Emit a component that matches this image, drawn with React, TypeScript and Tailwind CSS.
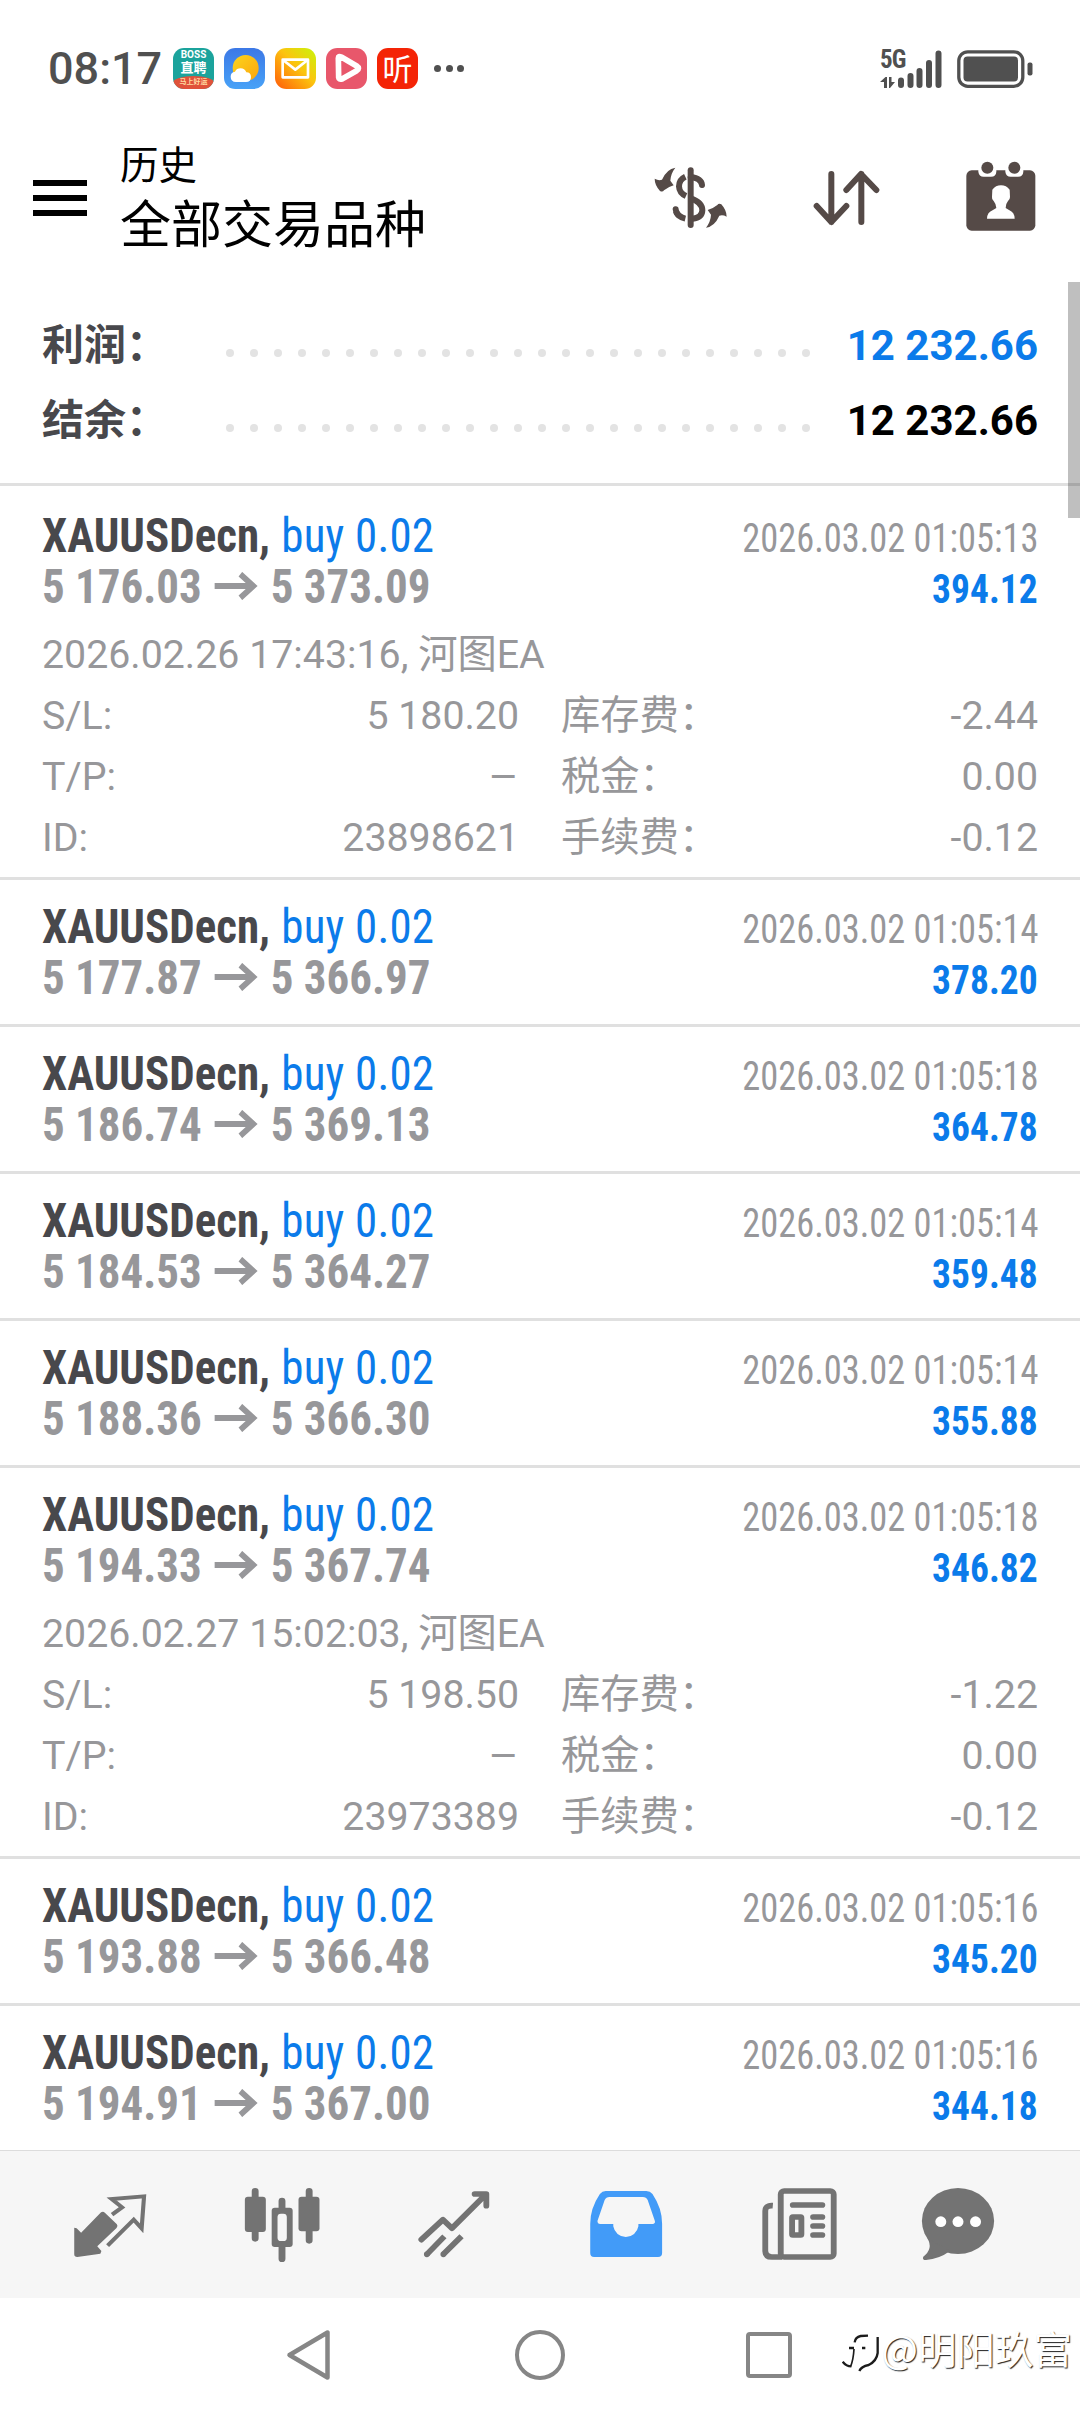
import type { ReactNode } from "react";

type Details = {
  opened: string;
  sl: string;
  id: string;
  swap: string;
  tax: string;
  fee: string;
};

type Deal = {
  open: string;
  close: string;
  time: string;
  profit: string;
  details?: Details;
};

const deals: Deal[] = [
  {
    open: "5 176.03",
    close: "5 373.09",
    time: "2026.03.02 01:05:13",
    profit: "394.12",
    details: {
      opened: "2026.02.26 17:43:16, 河图EA",
      sl: "5 180.20",
      id: "23898621",
      swap: "-2.44",
      tax: "0.00",
      fee: "-0.12",
    },
  },
  { open: "5 177.87", close: "5 366.97", time: "2026.03.02 01:05:14", profit: "378.20" },
  { open: "5 186.74", close: "5 369.13", time: "2026.03.02 01:05:18", profit: "364.78" },
  { open: "5 184.53", close: "5 364.27", time: "2026.03.02 01:05:14", profit: "359.48" },
  { open: "5 188.36", close: "5 366.30", time: "2026.03.02 01:05:14", profit: "355.88" },
  {
    open: "5 194.33",
    close: "5 367.74",
    time: "2026.03.02 01:05:18",
    profit: "346.82",
    details: {
      opened: "2026.02.27 15:02:03, 河图EA",
      sl: "5 198.50",
      id: "23973389",
      swap: "-1.22",
      tax: "0.00",
      fee: "-0.12",
    },
  },
  { open: "5 193.88", close: "5 366.48", time: "2026.03.02 01:05:16", profit: "345.20" },
  { open: "5 194.91", close: "5 367.00", time: "2026.03.02 01:05:16", profit: "344.18" },
];

function StatusBar() {
  return (
    <div className="flex h-[137px] shrink-0 items-center pl-[48px] pr-[47px] text-[#505050]">
      <span className="w-[125px] text-[45px] font-medium leading-none">08:17</span>
      <div className="flex items-center gap-[10px]">
        <div className="flex size-[41px] flex-col items-center overflow-hidden rounded-[11px] bg-[#1ba39c] font-bold text-white">
          <span className="mt-[2px] text-[10px] leading-[10px]">BOSS</span>
          <span className="text-[13px] leading-[16px]">直聘</span>
          <span className="w-full rounded-t-[50%] bg-[#e0523a] text-center text-[7px] leading-[13px] text-[#ffd9a0]">
            马上好运
          </span>
        </div>
        <svg className="size-[41px]" viewBox="0 0 123 123">
          <defs>
            <linearGradient id="sky" x1="0" y1="0" x2="0" y2="1">
              <stop offset="0" stopColor="#3c78e6" />
              <stop offset="1" stopColor="#48a2f7" />
            </linearGradient>
            <linearGradient id="sun" x1="0" y1="0" x2="1" y2="1">
              <stop offset="0" stopColor="#fcd51c" />
              <stop offset="1" stopColor="#fca50e" />
            </linearGradient>
          </defs>
          <rect width="123" height="123" rx="34" fill="url(#sky)" />
          <circle cx="65" cy="60" r="39" fill="url(#sun)" />
          <path
            d="M36 102q-16-1-16-16 0-13 13-15 5-10 17-10 12 0 17 12 14 0 14 14 0 15-15 15z"
            fill="#fff"
          />
        </svg>
        <svg className="size-[41px]" viewBox="0 0 123 123">
          <defs>
            <linearGradient id="mail" x1="0" y1="1" x2="1" y2="0">
              <stop offset="0" stopColor="#ff5a0a" />
              <stop offset="0.55" stopColor="#fcc40f" />
              <stop offset="1" stopColor="#c8f50a" />
            </linearGradient>
          </defs>
          <rect width="123" height="123" rx="34" fill="url(#mail)" />
          <g fill="none" stroke="#fff" strokeWidth="8" strokeLinejoin="round">
            <rect x="23" y="35" width="76" height="53" />
            <path d="M24 36l37 29 37-29" />
          </g>
        </svg>
        <svg className="size-[41px]" viewBox="0 0 123 123">
          <rect width="123" height="123" rx="34" fill="#e8576b" />
          <path
            d="M37 31q0-8 9-4l46 27q11 7 0 14L48 93q-9 3-10-5z"
            fill="#e8576b"
            stroke="#fff"
            strokeWidth="17"
            strokeLinejoin="round"
          />
        </svg>
        <div className="flex size-[41px] items-center justify-center rounded-[11px] bg-[#f42406]">
          <span className="-mt-[3px] font-['Noto_Sans_CJK_SC'] text-[30px] font-normal leading-none text-white">听</span>
        </div>
      </div>
      <div className="ml-[16px] flex gap-[4.500px]">
        <i className="size-[7px] rounded-full bg-[#505050]" />
        <i className="size-[7px] rounded-full bg-[#505050]" />
        <i className="size-[7px] rounded-full bg-[#505050]" />
      </div>
      <div className="relative ml-auto h-[38px] w-[62px]">
        <span className="absolute left-0 top-0 text-[25px] font-bold leading-[19px] tracking-[-1px] [font-stretch:75%]">
          5G
        </span>
        <svg className="h-[38px] w-[62px]" viewBox="0 0 62 38">
          <g stroke="#505050" strokeWidth="6" strokeLinecap="round">
            <path d="M21 30.500V35M30.500 26V35M39.500 21V35M49 13V35M58.500 3.500V35" />
          </g>
          <path d="M0 32L5.500 27H7V38H4V32zM9 27h2.500v5H15l-5 6H9z" fill="#505050" />
        </svg>
      </div>
      <svg className="ml-[15px] h-[38px] w-[76px]" viewBox="0 0 76 38">
        <rect x="1.800" y="1.800" width="64" height="34.500" rx="9" fill="none" stroke="#505050" strokeWidth="3.300" />
        <rect x="6.500" y="6.500" width="54.500" height="25" rx="4" fill="#505050" />
        <rect x="70.500" y="12.500" width="5" height="13" rx="2" fill="#505050" />
      </svg>
    </div>
  );
}

function Header() {
  return (
    <header className="flex h-[122px] shrink-0 items-center pl-[33px] pr-[44px]">
      <div className="flex flex-col gap-[9px]">
        <i className="h-[6px] w-[54px] bg-black" />
        <i className="h-[6px] w-[54px] bg-black" />
        <i className="h-[6px] w-[54px] bg-black" />
      </div>
      <div className="-mt-3 ml-[33px] font-['Noto_Sans_CJK_SC','Roboto',sans-serif] text-black">
        <div className="text-[38.500px] leading-[59px]">历史</div>
        <h1 className="text-[51px] leading-[59px]">全部交易品种</h1>
      </div>
      <svg className="ml-auto h-[62px] w-[73px]" viewBox="40 52 219 186" fill="none" stroke="#554a47">
        <path d="M150 62V226" strokeWidth="18" strokeLinecap="round" />
        <path d="M150 82Q182 86 184 106M105 179Q106 190 112 196" strokeWidth="18" strokeLinecap="round" />
        <path
          d="M134 81Q115 90 115 110Q116 130 136 139M150 146Q185 158 185 182Q184 204 156 207M106 184Q112 202 134 207"
          strokeWidth="18"
        />
        <path
          id="swap"
          d="M104 54Q78 58 64 90Q54 94 42 87Q42 106 58 124Q66 128 70 122Q82 112 99 107L89 93Q90 72 104 54Z"
          fill="#554a47"
          stroke="none"
        />
        <use href="#swap" transform="rotate(180 150 144)" />
      </svg>
      <svg
        className="ml-[86px] h-[56px] w-[67px]"
        viewBox="518 60 201 168"
        fill="none"
        stroke="#554a47"
        strokeWidth="18"
        strokeLinecap="round"
        strokeLinejoin="round"
      >
        <path d="M573 72V216M529 168L573 216L618 168M663 216V72M618 120L662 72L708 120" />
      </svg>
      <svg className="-mt-1 ml-[86px] size-[70px]" viewBox="977 34 210 210" fill="#554a47">
        <rect x="978" y="62" width="207" height="181" rx="16" />
        <path
          d="M1014 50V66Q1016 81 1030 81H1052Q1067 81 1068 66V50ZM1095 50V66Q1097 81 1111 81H1133Q1148 81 1149 66V50Z"
          fill="#fff"
        />
        <circle cx="1041" cy="54" r="18" />
        <circle cx="1122" cy="54" r="18" />
        <path
          d="M1040 207Q1040 188 1058 181L1068 175Q1068 164 1060 154Q1054 150 1055 142L1056 120Q1066 107 1082 107Q1098 107 1108 120L1109 142Q1109 150 1103 154Q1095 164 1096 175L1106 181Q1123 188 1123 207Z"
          fill="#fff"
        />
      </svg>
    </header>
  );
}

function SummaryRow({ label, value, blue }: { label: string; value: string; blue?: boolean }) {
  return (
    <div className="flex h-[75px] items-center text-[42px] font-bold leading-[75px]">
      <span className="w-[184px] text-[#48484c]">{label}</span>
      <div className="mt-[15px] flex w-[584px] justify-between">
        {Array.from({ length: 25 }, (_, i) => (
          <i key={i} className="size-[8px] rounded-full bg-[#e3e3e3]" />
        ))}
      </div>
      <span className={blue ? "ml-auto text-[#0b7bea]" : "ml-auto text-black"}>{value}</span>
    </div>
  );
}

function Field({ label, children }: { label: string; children: ReactNode }) {
  return (
    <div className="flex justify-between">
      <span>{label}</span>
      <span>{children}</span>
    </div>
  );
}

function DealRow({ deal, first }: { deal: Deal; first: boolean }) {
  const d = deal.details;
  return (
    <div className={`border-t-[3px] border-[#e0e0e0] px-[42px] ${first ? "pt-[24px]" : "pt-[21px]"}`}>
      <div className="flex h-[51px] items-baseline justify-between leading-[52px] [font-stretch:75%]">
        <div className="origin-left scale-x-[0.937] text-[48px]">
          <span className="font-bold text-[#48484c]">XAUUSDecn,</span>{" "}
          <span className="ml-[1px] tracking-[0.200px] text-[#0b7bea]">buy 0.02</span>
        </div>
        <span className="origin-right scale-x-[0.910] text-[40px] text-[#97979a]">{deal.time}</span>
      </div>
      <div className="flex h-[51px] items-baseline justify-between font-bold leading-[51px] [font-stretch:75%]">
        <div className="origin-left scale-x-[0.937] text-[48px] text-[#97979a]">
          {deal.open}
          <svg
            className="mx-[13.500px] mb-[3px] inline-block h-[28px] w-[46.500px] align-baseline"
            viewBox="0 0 47 28"
            fill="none"
            stroke="currentColor"
            strokeWidth="6"
          >
            <path d="M0 14H43M28 2L42 14L28 26" />
          </svg>
          {deal.close}
        </div>
        <span className="origin-right scale-x-[0.937] text-[40px] text-[#0b7bea]">{deal.profit}</span>
      </div>
      {d ? (
        <div className="mt-[13px] pb-[8px] text-[39.300px] leading-[61px] text-[#97979a]">
          <div>{d.opened}</div>
          <div className="grid grid-cols-2 gap-x-[42px]">
            <Field label="S/L:">{d.sl}</Field>
            <Field label="库存费：">{d.swap}</Field>
            <Field label="T/P:">
              <span className="inline-block origin-right scale-x-[1.180]">–</span>
            </Field>
            <Field label="税金：">{d.tax}</Field>
            <Field label="ID:">{d.id}</Field>
            <Field label="手续费：">{d.fee}</Field>
          </div>
        </div>
      ) : (
        <div className="h-[21px]" />
      )}
    </div>
  );
}

function TabBar() {
  return (
    <nav className="grid h-[148px] shrink-0 grid-cols-6 place-items-center border-t border-[#dcdcdc] bg-[#f6f6f6] px-6 text-[#737373]">
      <svg className="size-[76px]" viewBox="208.500 198 221 228" preserveAspectRatio="none">
        <path
          d="M293 274Q299 270 304 275L339 310Q343 315 338 321L282 376L294 390L291 398L224 408Q215 408 215 400V320L222 322L235 335Z"
          fill="currentColor"
        />
        <path
          d="M325 281L354 259L324 234L418 226L411 322L388 296L312 374"
          fill="none"
          stroke="currentColor"
          strokeWidth="12"
        />
      </svg>
      <svg className="size-[76px]" viewBox="706.500 198 221 228" preserveAspectRatio="none">
        <path
          d="M739 211V352M896 211V358M817 240V270M817 370V413"
          stroke="currentColor"
          strokeWidth="20"
          strokeLinecap="round"
        />
        <rect x="709" y="227" width="61" height="106" rx="9" fill="currentColor" />
        <rect x="865" y="227" width="61" height="104" rx="9" fill="currentColor" />
        <rect x="787" y="260" width="61" height="118" rx="9" fill="currentColor" />
        <rect x="804" y="278" width="27" height="82" rx="10" fill="#f6f6f6" />
      </svg>
      <svg
        className="size-[76px]"
        viewBox="1206.500 198 221 228"
        preserveAspectRatio="none"
        fill="none"
        stroke="currentColor"
        strokeWidth="17"
        strokeLinejoin="round"
      >
        <path d="M1222 356L1285 296L1311 322L1408 222M1377 219H1411V254" strokeLinecap="round" />
        <path d="M1238 400L1289 346M1286 400L1339 346" />
        <path d="M1238 400h.1M1286 400h.1" strokeLinecap="round" />
      </svg>
      <svg className="size-[76px] text-[#429bf8]" viewBox="140.500 198 221 228" preserveAspectRatio="none">
        <path
          fill="currentColor"
          fillRule="evenodd"
          d="M192 210H310Q321 210 328 219Q356 262 356 308V396Q356 408 344 408H158Q147 408 147 396V308Q147 262 175 219Q182 210 192 210ZM203 228Q193 228 189 237L168 300Q168 309 176 309H214V316A37 38 0 0 0 287 316V309H328Q337 308 335 300L314 237Q310 228 300 228Z"
        />
      </svg>
      <svg
        className="ml-1 size-[76px]"
        viewBox="645.500 198 221 228"
        preserveAspectRatio="none"
        fill="none"
        stroke="currentColor"
        strokeWidth="17"
      >
        <rect x="700" y="210" width="154" height="198" rx="10" />
        <path d="M677 254Q655 252 655 270V390Q656 408 674 408H704" />
        <path d="M735 252H821M794 288H821M794 315H821M794 342H821" strokeLinecap="round" />
        <rect x="733" y="288" width="27" height="54" rx="2" />
      </svg>
      <svg className="mr-6 size-[76px]" viewBox="1102.500 198 221 228" preserveAspectRatio="none" fill="currentColor">
        <ellipse cx="1213" cy="300" rx="105" ry="99" />
        <path d="M1124 352Q1142 384 1112 407Q1108 417 1120 417Q1158 414 1190 390Z" />
        <g fill="#fff">
          <circle cx="1163" cy="302" r="16" />
          <circle cx="1213" cy="302" r="16" />
          <circle cx="1264" cy="302" r="16" />
        </g>
      </svg>
    </nav>
  );
}

function SystemNav() {
  return (
    <div className="relative grid h-[114px] shrink-0 grid-cols-3 place-items-center px-[193px]">
      <svg className="h-[52px] w-[46px]" viewBox="0 0 46 52" fill="none" stroke="#868686" strokeWidth="4.500" strokeLinejoin="round">
        <path d="M41.500 3.500V48.500L3.500 26Z" />
      </svg>
      <i className="size-[50px] rounded-full border-[4.500px] border-[#868686]" />
      <i className="mr-1 size-[46px] rounded-[4px] border-[4.500px] border-[#868686]" />
      <div className="absolute bottom-[40px] right-[8px] flex items-center text-white">
        <svg className="mr-[3px] mt-[12px] h-[38px] w-[37px]" viewBox="40 84 111 112" fill="none" stroke="#1c1c1c">
          <path d="M78 108Q80 92 96 89L118 88M61 125H76M100 125H110" strokeWidth="7" />
          <path d="M76 128Q74 160 66 180" strokeWidth="5" />
          <path d="M42 166Q52 180 68 180M147 92V140Q144 164 120 176Q98 180 92 194" strokeWidth="7" />
        </svg>
        <span className="font-['Noto_Sans_CJK_SC'] text-[38.500px] leading-[48px] [text-shadow:1px_1px_1px_#222]">
          @明阳玖富
        </span>
      </div>
    </div>
  );
}

export default function App() {
  return (
    <div className="relative flex h-[2412px] w-[1080px] flex-col overflow-hidden bg-white font-['Roboto','Noto_Sans_CJK_SC',sans-serif]">
      <StatusBar />
      <Header />
      <section className="h-[224px] shrink-0 px-[42px] pt-[49px]">
        <SummaryRow label="利润：" value="12 232.66" blue />
        <SummaryRow label="结余：" value="12 232.66" />
      </section>
      <main className="min-h-0 flex-1">
        {deals.map((deal, i) => (
          <DealRow key={deal.open} deal={deal} first={i === 0} />
        ))}
      </main>
      <TabBar />
      <SystemNav />
      {/* scroll thumb */}
      <div className="absolute right-0 top-[282px] h-[236px] w-[12px] bg-black/25" />
    </div>
  );
}
